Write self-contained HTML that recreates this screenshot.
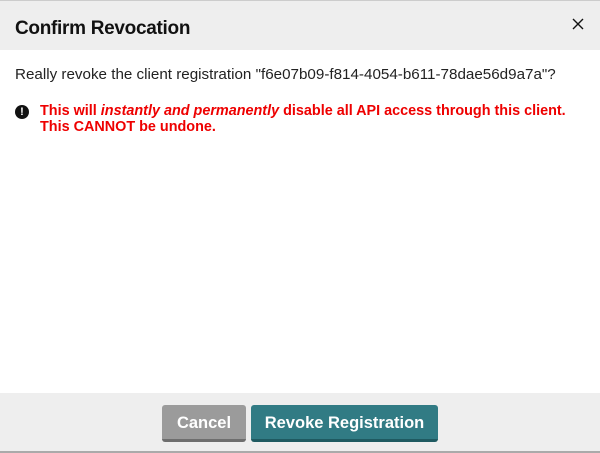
<!DOCTYPE html><html><head><style>
body{margin:0;width:600px;height:453px;background:#fff;font-family:"Liberation Sans",sans-serif;position:relative;overflow:hidden}
.hd{position:absolute;left:0;top:0;width:600px;height:50px;background:#eeeeee;border-top:1px solid #ccc;box-sizing:border-box}
.hd h1{position:absolute;left:15px;top:17px;margin:0;font-size:19px;font-weight:bold;color:#111;letter-spacing:-0.3px}
.x{position:absolute;left:571px;top:16px;width:14px;height:14px}
.q{position:absolute;left:15px;top:66px;font-size:15.2px;color:#222}
.w{position:absolute;left:40px;top:103px;font-size:14.4px;font-weight:bold;color:#ee0000;line-height:16px}
.ic{position:absolute;left:15px;top:105px;width:14px;height:14px;border-radius:50%;background:#111;color:#fff;font-size:11px;font-weight:bold;text-align:center;line-height:14px}
.ft{position:absolute;left:0;top:393px;width:600px;height:58px;background:#eeeeee;border-bottom:2px solid #aaa}
.b{position:absolute;top:12px;height:37px;border-radius:3px;color:#fff;font-weight:bold;font-size:16.5px;text-align:center;line-height:37px;box-sizing:border-box}
</style></head><body>
<div class="hd"><h1>Confirm Revocation</h1>
<svg class="x" viewBox="0 0 14 14"><path d="M2 2L12 12M12 2L2 12" stroke="#111" stroke-width="1.4"/></svg></div>
<div class="q">Really revoke the client registration "f6e07b09-f814-4054-b611-78dae56d9a7a"?</div>
<div class="ic">!</div>
<div class="w">This will <i>instantly and permanently</i> disable all API access through this client.<br>This CANNOT be undone.</div>
<div class="ft">
<div class="b" style="left:162px;width:84px;background:#9b9b9b;border-bottom:3px solid #6e6e6e">Cancel</div>
<div class="b" style="left:251px;width:187px;background:#317b84;border-bottom:3px solid #1f5a61">Revoke Registration</div>
</div>
</body></html>
